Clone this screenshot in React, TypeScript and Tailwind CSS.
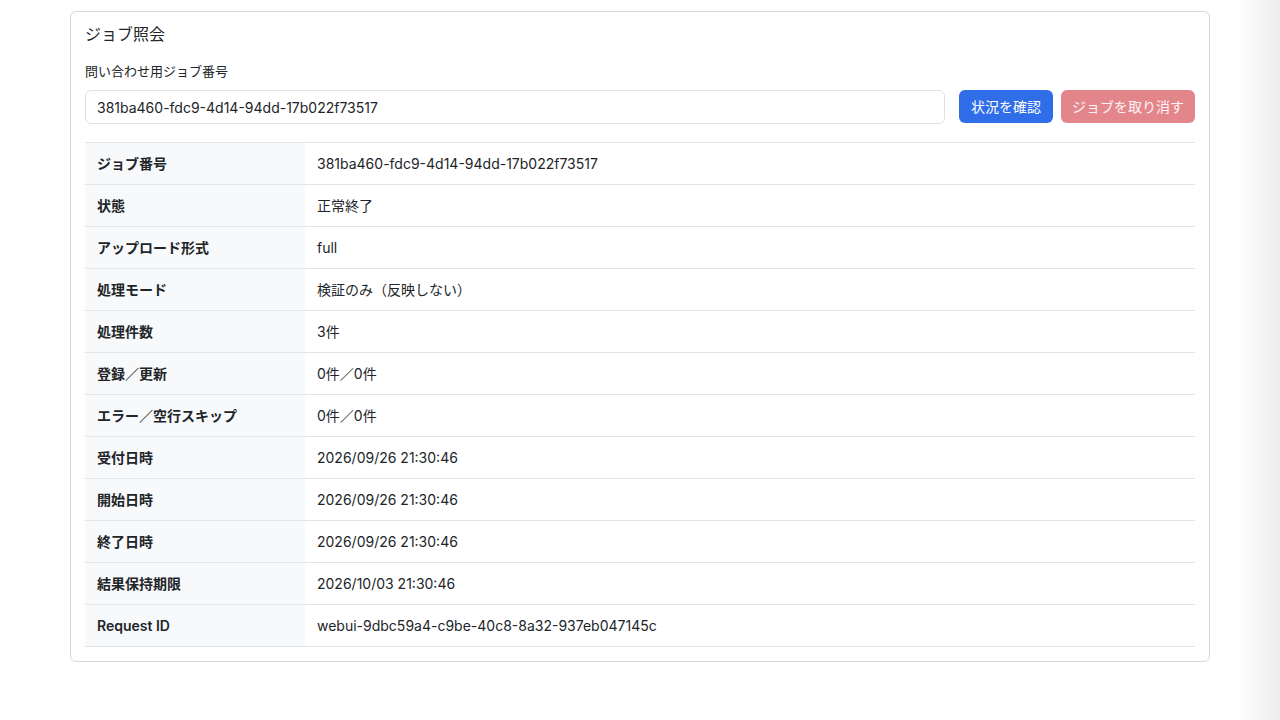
import React from "react";

const rows: [string, string][] = [
  ["ジョブ番号", "381ba460-fdc9-4d14-94dd-17b022f73517"],
  ["状態", "正常終了"],
  ["アップロード形式", "full"],
  ["処理モード", "検証のみ（反映しない）"],
  ["処理件数", "3件"],
  ["登録／更新", "0件／0件"],
  ["エラー／空行スキップ", "0件／0件"],
  ["受付日時", "2026/09/26 21:30:46"],
  ["開始日時", "2026/09/26 21:30:46"],
  ["終了日時", "2026/09/26 21:30:46"],
  ["結果保持期限", "2026/10/03 21:30:46"],
  ["Request ID", "webui-9dbc59a4-c9be-40c8-8a32-937eb047145c"],
];

export default function App() {
  return (
    <div
      className="relative min-h-[720px] w-full bg-white text-[#212529]"
      style={{ fontFamily: 'Inter, "Noto Sans CJK JP", sans-serif' }}
    >
      <div className="px-[70px] pt-[11px]">
        <div className="rounded-[6px] border border-[#d5d8dc] px-[14px] pt-[10px] pb-[14px]">
          <h1 className="text-[16px] leading-[24px] font-normal">ジョブ照会</h1>
          <div className="mt-[15px] text-[13px] leading-[20px]">問い合わせ用ジョブ番号</div>
          <div className="mt-[9px] flex items-start">
            <div className="flex h-[34px] flex-1 items-center rounded-[6px] border border-[#dee2e6] px-[11px] text-[14px]">
              381ba460-fdc9-4d14-94dd-17b022f73517
            </div>
            <button className="ml-[14px] h-[33px] rounded-[6px] bg-[#2f6de9] px-[12px] text-[14px] text-white">
              状況を確認
            </button>
            <button className="ml-[8px] h-[33px] rounded-[6px] bg-[#e2868c] px-[11px] text-[14px] text-white/90">
              ジョブを取り消す
            </button>
          </div>
          <div className="mt-[18px] border-t border-[#e3e5e8]">
            {rows.map(([k, v]) => (
              <div key={k} className="flex border-b border-[#e3e5e8] text-[14px] leading-[21px]">
                <div className="w-[220px] bg-[#f8f9fa] px-[12px] py-[10px] font-semibold">{k}</div>
                <div className="flex-1 px-[12px] py-[10px]">{v}</div>
              </div>
            ))}
          </div>
        </div>
      </div>
      <div className="pointer-events-none absolute top-0 right-0 h-full w-[44px] bg-gradient-to-r from-white/0 to-[#ececec]" />
    </div>
  );
}
